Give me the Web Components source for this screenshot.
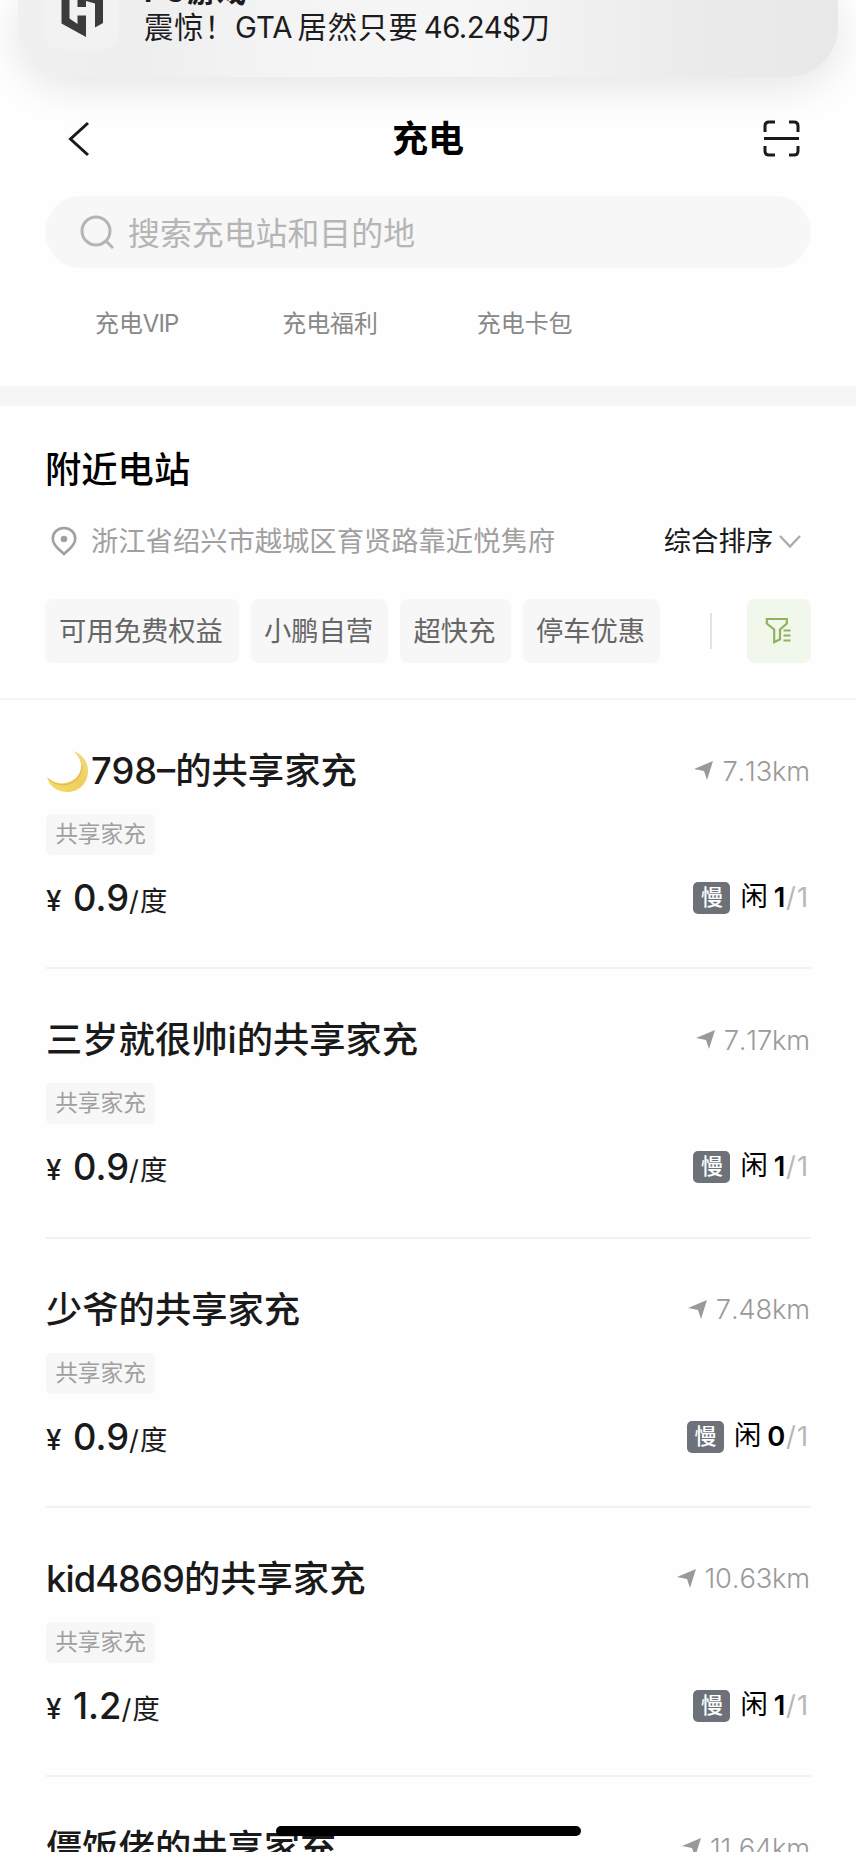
<!DOCTYPE html>
<html lang="zh-CN">
<head>
<meta charset="utf-8">
<title>充电</title>
<style>
html,body{margin:0;height:1852px;overflow:hidden;background:#fefefe}
body{font-family:Inter,"Noto Sans CJK SC",sans-serif;color:#1a1a1a}
</style>
</head>
<body>
<charge-app></charge-app>
<script>
const define = (name, html, init) => {
  const template = document.createElement('template');
  template.innerHTML = '<style>:host{display:block;box-sizing:border-box}*{box-sizing:border-box}svg{display:block;flex:none}</style>' + html;
  customElements.define(name, class extends HTMLElement {
    constructor() {
      super();
      this.attachShadow({mode: 'open'}).append(template.content.cloneNode(true));
    }
    connectedCallback() { if (init) init(this, this.shadowRoot); }
  });
};

define('push-banner', `
<style>
:host{height:77px;margin:0 18px;border-radius:0 0 50px 50px;overflow:hidden;
 background:linear-gradient(90deg,#f0f0f0 0,#eee 14%,#f4f4f4 32%,#f6f6f6 55%,#ebebeb 82%,#e8e8e8 100%)}
.row{display:flex;height:77px}
.icon{width:74px;height:49px;margin-left:27px;background:#f2f2f2;border-radius:0 0 14px 14px}
.copy{margin:-24px 0 0 25px;font-size:29.300px;line-height:32px;letter-spacing:1px;white-space:nowrap;color:#1c1c1e}
b{display:block;font-weight:700;height:36px}
</style>
<div class="row">
 <div class="icon"><svg width="74" height="49" viewBox="0 0 74 49"><path fill="#3a3b3d" d="M16.500 0h8v18.500l8 5.500v-8.500H41V37L16.500 23.500zM32.500 0H58v23l-8 4.500V3.500L41 1v6h-8.500z"/></svg></div>
 <div class="copy"><b>PC游戏</b><slot></slot></div>
</div>`);

define('nav-bar', `
<style>
:host{height:119px;display:grid;grid-template-columns:1fr auto 1fr;align-items:center;padding:4px 56px 0}
h1{margin:0;font-size:36px;line-height:44px;font-weight:700;color:#000}
.back{margin-left:11px}.scan{justify-self:end}
</style>
<svg class="back" width="37" height="36" viewBox="0 0 37 36"><path d="M21 2 3.500 18 21 34" fill="none" stroke="#1a1a1a" stroke-width="3"/></svg>
<h1><slot></slot></h1>
<svg class="scan" width="37" height="37" viewBox="0 0 37 37" fill="none" stroke="#1a1a1a" stroke-width="3"><path d="M2 12V6q0-4 4-4h6M26 2h5q4 0 4 4v6M2 26v5q0 4 4 4h6M26 35h5q4 0 4-4v-5M1 18.500h35"/></svg>`);

define('search-field', `
<style>
:host{height:72px;margin:0 45px;border-radius:36px;background:#f7f7f7;display:flex;align-items:center;padding:0 0 3px 35px;font-size:31.900px;color:#b5b5b5}
svg{margin:3px 14px 0 0}
</style>
<svg width="34" height="34" viewBox="0 0 34 34" fill="none" stroke="#b5b5b5" stroke-width="3"><circle cx="16" cy="16" r="14"/><path d="m26 26 7 7"/></svg>
<slot></slot>`);

define('quick-links', `
<style>
:host{display:flex;height:118px;padding:38px 0 0 95px;font-size:23.900px;line-height:35px;color:#888}
::slotted(span){display:block;white-space:nowrap}
</style><slot></slot>`);

define('filter-chip', `
<style>
:host{height:64px;border-radius:8px;background:#f7f7f7;color:#666;font-size:27.300px;line-height:66px;text-align:center;flex:none;padding-right:2px}
</style><slot></slot>`);

define('filter-button', `
<style>
:host{width:65px;height:64px;border-radius:8px;background:#f2f7eb;padding:17px 0 0 17px}
</style>
<svg width="28" height="28" viewBox="0 0 28 28" fill="none" stroke="#8db35c" stroke-width="2.200"><path d="M2.800 3h20v4.500L16 13.500v9.800l-5.800 2.900V13.500L2.800 7.500z"/><path d="M19.500 14.500h7M19.500 19.500h7M19.500 24.500h7"/></svg>`);

define('nearby-head', `
<style>
:host{display:flow-root;height:314px;border-top:20px solid #f6f6f6;border-bottom:2px solid #f3f3f3;padding:0 45px}
h2{margin:39px 0 0;font-size:36.300px;line-height:50px;font-weight:500;color:#000}
.addr{display:flex;align-items:center;height:40px;margin-top:27px;font-size:27.300px;line-height:40px;color:#a0a0a0;white-space:nowrap;padding:0 10px 0 6px}
.addr svg:first-child{margin:-3px 14px 0 0}
.sort{margin-left:auto;color:#1a1a1a;margin-right:6px}
.chips{display:flex;align-items:center;margin-top:37px;gap:12px}
i{width:2px;height:36px;background:#e3e3e3;margin:0 23px 0 38px}
</style>
<h2>附近电站</h2>
<div class="addr">
<svg width="26" height="30" viewBox="0 0 26 30"><path d="M13 2C6.800 2 1.800 6.600 1.800 12.600c0 4 2.200 7 5 9.600L13 28l6.200-5.800c2.800-2.600 5-5.600 5-9.600C24.200 6.600 19.200 2 13 2z" fill="none" stroke="#a0a0a0" stroke-width="2.600"/><circle cx="13" cy="13" r="3.300" fill="#a0a0a0"/></svg>
<span>浙江省绍兴市越城区育贤路靠近悦隽府</span><span class="sort">综合排序</span>
<svg width="22" height="14" viewBox="0 0 22 14"><path d="m1 1 10 10.500L21 1" fill="none" stroke="#aaa" stroke-width="2.300"/></svg>
</div>
<div class="chips">
<filter-chip style="width:194px">可用免费权益</filter-chip><filter-chip style="width:137px">小鹏自营</filter-chip><filter-chip style="width:111px">超快充</filter-chip><filter-chip style="width:137px">停车优惠</filter-chip><i></i><filter-button></filter-button>
</div>`);

define('moon-icon', `
<style>:host{display:inline-block;width:45px;height:42px;vertical-align:-8px}</style>
<svg width="43" height="43" viewBox="0 0 43 43"><defs><linearGradient id="g" x1="0" y1="1" x2="1" y2="0"><stop offset="0" stop-color="#f6dc6c"/><stop offset=".5" stop-color="#f0ce5c"/><stop offset="1" stop-color="#f3db83"/></linearGradient></defs>
<path fill="url(#g)" d="M27 1c9 3 15 10 15 20 0 12-9 21-20 21C11 42 3 36 1 27c5 5 11 7 18 6 10-1 17-10 16-19-1-5-3-9-8-13z"/><path d="M3 29c5 5 12 7 19 5 9-2 14-10 14-19" fill="none" stroke="#c99d35" stroke-width=".8" opacity=".65"/></svg>`);

define('station-item', `
<style>
:host{display:flow-root;height:269.300px;margin:0 45px 0 46px;padding-top:46px;border-bottom:2px solid #f2f2f2}
.top,.bottom{display:flex;justify-content:space-between;align-items:center;white-space:nowrap}
.top{height:50px}
.name{font-size:36.300px;line-height:50px;font-weight:500;color:#1a1a1a}
.km{display:flex;align-items:center;font-size:27.300px;color:#9a9a9a;font-weight:350;padding-right:1px;font-kerning:none;letter-spacing:-.15px}
.km svg{margin-right:9px}
.tag{width:109px;height:41px;border-radius:5px;background:#f7f7f7;color:#a0a0a0;font-size:22.700px;line-height:40px;text-align:center;margin-top:18px}
.bottom{height:50px;margin-top:18px}
.price{display:flex;align-items:baseline;font-size:27.300px}
.yen{font-size:27.800px;width:27px;font-weight:500}.price b{font-size:36.300px;font-weight:500}
.unit{letter-spacing:1.200px}
.free{display:flex;align-items:center;font-size:27.300px;line-height:32px;padding-right:1px;color:#000}
.slow{width:37px;height:32px;border-radius:5px;background:#6c717a;color:#fff;font-size:22px;line-height:31px;text-align:center;margin-right:10px;font-weight:500}
.idle{margin-top:-2px}
.free b{font-weight:600;margin-left:6px;letter-spacing:.8px}.free em{font-style:normal;color:#b8b8b8;letter-spacing:1px;padding-right:1px}
</style>
<div class="top"><div class="name"><slot></slot></div><div class="km"><svg width="19" height="20" viewBox="0 0 19 20"><path fill="#999" d="M0 8 19 0l-6 19-3-9z"/></svg><span id="km"></span></div></div>
<div class="tag">共享家充</div>
<div class="bottom"><div class="price"><span class="yen">¥</span><b id="price"></b><span class="unit">/度</span></div><div class="free"><span class="slow">慢</span><span class="idle">闲</span><b id="n"></b><em>/1</em></div></div>`,
(host, root) => {
  for (const k of ['km', 'price', 'n']) root.getElementById(k).textContent = host.getAttribute(k);
});

define('home-indicator', `<style>:host{position:absolute;left:276px;top:1826px;width:305px;height:10px;border-radius:5px;background:#000}</style>`);

define('charge-app', `
<style>
:host{position:relative;height:1852px;width:856px;overflow:hidden}
.page{display:flex;flex-direction:column}
.page>*{flex:none}
push-banner{box-shadow:0 8px 44px rgba(0,0,0,.11)}
.gta{letter-spacing:0;margin-right:5px}.sum{letter-spacing:-.5px;margin-left:5px}
.vip{letter-spacing:-.9px}.kid{letter-spacing:-.9px}
quick-links span:nth-child(2){margin-left:104px}quick-links span:nth-child(3){margin-left:99px}
</style>
<div class="page">
<push-banner>震惊！<span class="gta">GTA</span>居然只要<span class="sum">46.24$</span>刀</push-banner>
<nav-bar>充电</nav-bar>
<search-field>搜索充电站和目的地</search-field>
<quick-links><span>充电<span class="vip" style="margin:0">VIP</span></span><span>充电福利</span><span>充电卡包</span></quick-links>
<nearby-head></nearby-head>
<main>
<station-item km="7.13km" price="0.9" n="1"><moon-icon></moon-icon>798–的共享家充</station-item>
<station-item km="7.17km" price="0.9" n="1">三岁就很帅i的共享家充</station-item>
<station-item km="7.48km" price="0.9" n="0">少爷的共享家充</station-item>
<station-item km="10.63km" price="1.2" n="1"><span class="kid">kid4869</span>的共享家充</station-item>
<station-item km="11.64km" price="1.2" n="1">僵饭佬的共享家充</station-item>
</main>
</div>
<home-indicator></home-indicator>`);
</script>
</body>
</html>
